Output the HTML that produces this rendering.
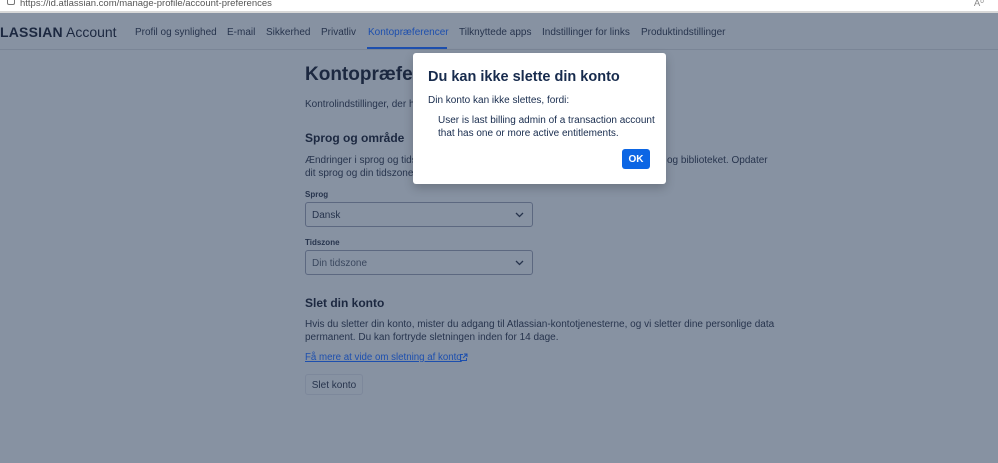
<!DOCTYPE html>
<html><head><meta charset="utf-8"><style>
*{box-sizing:border-box;margin:0;padding:0}
body{width:998px;height:463px;overflow:hidden;background:#8792a2;font-family:"Liberation Sans",sans-serif;color:#1f2b40;position:relative}
.addr{position:absolute;left:0;top:0;width:998px;height:13px;background:#fff;border-bottom:2px solid #d8d8d8;font-size:9.5px;color:#555;padding-left:20px;line-height:7px;overflow:hidden}
.addr .ic{position:absolute;left:7px;top:-3px;width:8px;height:8px;border:1px solid #777;border-radius:2px}
.nav{position:absolute;top:15px;left:0;width:998px;height:35px;border-bottom:1px solid #7a8596}
.logo{position:absolute;left:0;top:9px;font-size:14px;color:#1c2840}
.logo b{letter-spacing:0.2px}
.nav a{position:absolute;top:12px;font-size:10px;color:#27344d;text-decoration:none}
.nav a.act{color:#1d4fae}
.ul{position:absolute;left:367px;top:32px;width:80px;height:2px;background:#1d4fae}
.t{position:absolute;left:305px;font-size:10px;color:#27344d;white-space:nowrap}
h1{position:absolute;left:305px;top:64px;font-size:19px;font-weight:bold;color:#1c2840}
h2{position:absolute;left:305px;font-size:12px;font-weight:bold;color:#1c2840}
.lab{position:absolute;left:305px;font-size:8px;font-weight:bold;color:#27344d}
.sel{position:absolute;left:305px;width:228px;height:25px;border:1px solid #5c6880;border-radius:3px;font-size:10px;padding:7px 0 0 6px;color:#27344d}
.sel svg{position:absolute;right:8px;top:9px}
.btn{position:absolute;left:305px;top:374px;width:58px;height:21px;border:1px solid #7d889b;border-radius:3px;font-size:10px;padding-top:5px;text-align:center;color:#27344d}
.modal{position:absolute;left:413px;top:53px;width:253px;height:131px;background:#fff;border-radius:3px;box-shadow:0 4px 10px rgba(0,0,0,.2)}
.modal .mt{position:absolute;left:15px;top:16px;font-size:14.5px;font-weight:bold;color:#172b4d}
.modal .p{position:absolute;left:15px;top:42px;font-size:10px;color:#172b4d}
.modal .q{position:absolute;left:25px;top:61px;font-size:10px;color:#172b4d;line-height:13px}
.ok{position:absolute;left:209px;top:96px;width:28px;height:20px;background:#0c66e4;border-radius:3px;color:#fff;font-size:10px;font-weight:bold;text-align:center;padding-top:5px}
</style></head><body>
<div class="addr"><span class="ic"></span>https://id.atlassian.com/manage-profile/account-preferences<span style="position:absolute;right:14px;top:0;color:#888">A⁰</span></div>
<div class="nav">
<div class="logo"><b>LASSIAN</b> Account</div>
<a style="left:135px">Profil og synlighed</a>
<a style="left:227px">E-mail</a>
<a style="left:266px">Sikkerhed</a>
<a style="left:321px">Privatliv</a>
<a class="act" style="left:368px">Kontopræferencer</a>
<a style="left:459px">Tilknyttede apps</a>
<a style="left:542px">Indstillinger for links</a>
<a style="left:641px">Produktindstillinger</a>
<div class="ul"></div>
</div>
<h1>Kontopræferencer</h1>
<div class="t" style="top:99px">Kontrolindstillinger, der har</div>
<h2 style="top:131px">Sprog og område</h2>
<div class="t" style="top:155px">Ændringer i sprog og tidszone</div>
<div class="t" style="top:155px;left:667px">og biblioteket. Opdater</div>
<div class="t" style="top:168px">dit sprog og din tidszone f</div>
<div class="lab" style="top:190px">Sprog</div>
<div class="sel" style="top:202px">Dansk<svg width="9" height="6"><path d="M1 1l3.5 3.5L8 1" stroke="#27344d" fill="none" stroke-width="1.3"/></svg></div>
<div class="lab" style="top:238px">Tidszone</div>
<div class="sel" style="top:250px;color:#3a475e">Din tidszone<svg width="9" height="6"><path d="M1 1l3.5 3.5L8 1" stroke="#27344d" fill="none" stroke-width="1.3"/></svg></div>
<h2 style="top:296px">Slet din konto</h2>
<div class="t" style="top:319px">Hvis du sletter din konto, mister du adgang til Atlassian-kontotjenesterne, og vi sletter dine personlige data</div>
<div class="t" style="top:332px">permanent. Du kan fortryde sletningen inden for 14 dage.</div>
<div class="t" style="top:352px;color:#1d4fae;text-decoration:underline;font-size:9.7px">Få mere at vide om sletning af konto</div>
<svg style="position:absolute;left:459px;top:353px" width="9" height="9"><path d="M4 1.5H1.5v6h6V5M5 1h3v3M8 1L4 5" stroke="#1d4fae" fill="none" stroke-width="1"/></svg>
<div class="btn">Slet konto</div>
<div class="modal">
<div class="mt">Du kan ikke slette din konto</div>
<div class="p">Din konto kan ikke slettes, fordi:</div>
<div class="q">User is last billing admin of a transaction account<br>that has one or more active entitlements.</div>
<div class="ok">OK</div>
</div>
</body></html>
